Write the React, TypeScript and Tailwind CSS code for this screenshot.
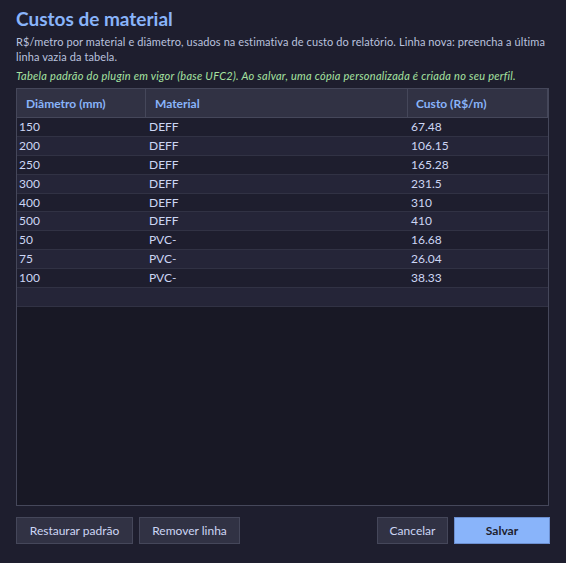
import React from "react";

const rows: [string, string, string][] = [
  ["150", "DEFF", "67.48"],
  ["200", "DEFF", "106.15"],
  ["250", "DEFF", "165.28"],
  ["300", "DEFF", "231.5"],
  ["400", "DEFF", "310"],
  ["500", "DEFF", "410"],
  ["50", "PVC-", "16.68"],
  ["75", "PVC-", "26.04"],
  ["100", "PVC-", "38.33"],
  ["", "", ""],
];

export default function App() {
  return (
    <div
      className="w-[566px] h-[563px] bg-[#1e1e2e] text-[#cdd6f4] flex flex-col px-4 pt-[6px] pb-[19px]"
      style={{ fontFamily: 'Lato, "Noto Sans", sans-serif' }}
    >
      <h1 className="text-[19px] leading-[26px] font-bold text-[#89b4fa]">Custos de material</h1>
      <p className="text-[11px] leading-[15px] mt-[2px] text-[#bac2de] tracking-[0.1px]">
        R$/metro por material e diâmetro, usados na estimativa de custo do relatório. Linha nova: preencha a última
        linha vazia da tabela.
      </p>
      <p className="text-[11px] leading-[15px] mt-[4px] italic text-[#a6e3a1] tracking-[0.27px]">
        Tabela padrão do plugin em vigor (base UFC2). Ao salvar, uma cópia personalizada é criada no seu perfil.
      </p>
      <div className="mt-[5px] w-[533px] h-[418px] border border-[#45475a] bg-[#181825] flex flex-col overflow-hidden">
        <div className="flex h-[29px] bg-[#313244] border-b border-[#45475a] text-[12px] font-bold text-[#89b4fa] shrink-0">
          <div className="w-[129px] border-r border-[#45475a] flex items-center pl-[9px] pt-[2px]">Diâmetro (mm)</div>
          <div className="w-[262px] border-r border-[#45475a] flex items-center pl-[9px] pt-[2px]">Material</div>
          <div className="flex-1 border-r border-[#45475a] flex items-center pl-[8px] pt-[2px]">Custo (R$/m)</div>
        </div>
        {rows.map((r, i) => (
          <div
            key={i}
            className={`flex h-[18.9px] shrink-0 border-b border-[#313244] text-[12px] leading-[18px] ${
              i % 2 === 0 ? "bg-[#1e1e2e]" : "bg-[#252538]"
            }`}
          >
            <div className="w-[129px] pl-[2px]">{r[0]}</div>
            <div className="w-[262px] pl-[3px]">{r[1]}</div>
            <div className="flex-1 pl-[3px]">{r[2]}</div>
          </div>
        ))}
      </div>
      <div className="mt-[11px] flex items-center text-[12px] w-[534px]">
        <button className="h-[27px] w-[117px] bg-[#313244] border border-[#45475a] text-[#cdd6f4]">Restaurar padrão</button>
        <button className="ml-[6px] h-[27px] w-[101px] bg-[#313244] border border-[#45475a] text-[#cdd6f4]">Remover linha</button>
        <div className="flex-1" />
        <button className="h-[27px] w-[71px] bg-[#313244] border border-[#45475a] text-[#cdd6f4]">Cancelar</button>
        <button className="ml-[6px] h-[27px] w-[96px] bg-[#89b4fa] border border-[#6c8fd0] text-[#1e1e2e] font-bold">Salvar</button>
      </div>
    </div>
  );
}
